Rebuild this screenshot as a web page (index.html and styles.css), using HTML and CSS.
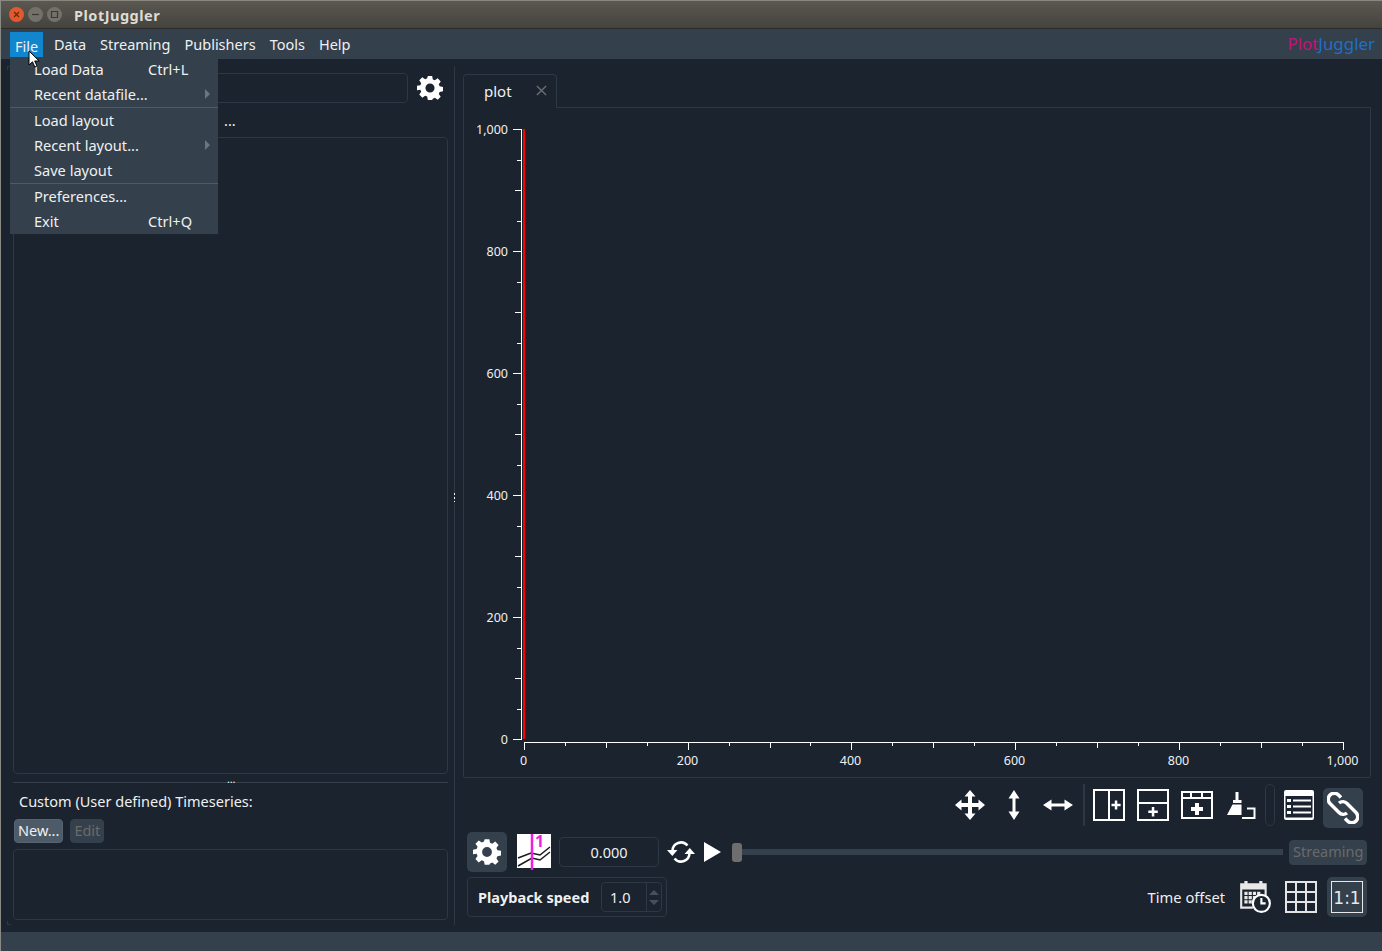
FILE: index.html
```html
<!DOCTYPE html>
<html lang="en">
<head>
  <meta charset="UTF-8" />
  <title>PlotJuggler</title>
  <link rel="stylesheet" href="styles.css">
</head>
<body>
  <div class="window">
    <div class="titlebar">
      <div class="win-buttons">
        <span class="win-btn close"><svg viewBox="0 0 15 15"><path d="M5 5l5 5M10 5l-5 5"/></svg></span>
        <span class="win-btn"><svg viewBox="0 0 15 15"><path d="M4 7.500h7"/></svg></span>
        <span class="win-btn"><svg viewBox="0 0 15 15"><path d="M4.500 4.500h6v6h-6z"/></svg></span>
      </div>
      <span class="win-title">PlotJuggler</span>
    </div>

    <div class="menubar">
      <span class="menu-item active">File</span>
      <span class="menu-item">Data</span>
      <span class="menu-item">Streaming</span>
      <span class="menu-item">Publishers</span>
      <span class="menu-item">Tools</span>
      <span class="menu-item">Help</span>
      <span class="logo"><span class="logo-plot">Plot</span><span class="logo-juggler">Juggler</span></span>
    </div>

    <div class="main">
      <div class="left-panel">
        <div class="filter-row">
          <div class="filter-box"></div>
          <svg class="gear" viewBox="0 0 24 24"><use href="#gear-icon"/></svg>
        </div>
        <div class="columns-row"><span>...</span></div>
        <div class="list-box top-list"></div>
        <div class="h-splitter"><span class="grip">...</span></div>
        <div class="custom-label">Custom (User defined) Timeseries:</div>
        <div class="custom-buttons">
          <button class="btn">New...</button>
          <button class="btn disabled">Edit</button>
        </div>
        <div class="list-box bottom-list"></div>
      </div>

      <div class="v-splitter"><span class="v-grip"></span></div>

      <div class="right-panel">
        <div class="tabs">
          <div class="tab">
            <span>plot</span>
            <svg class="tab-close" viewBox="0 0 12 12"><path d="M1 1L11 11M11 1L1 11"/></svg>
          </div>
        </div>
        <div class="plot-frame">
          <svg class="plot" id="plot" width="906" height="669" viewBox="464 108 906 669"></svg>
        </div>

        <div class="toolbar">
          <svg class="tool first" viewBox="0 0 32 32"><path class="solid" d="M16 1l5.500 6.500H18V14h6.500v-3.500L31 16l-6.500 5.500V18H18v6.500h3.500L16 31l-5.500-6.500H14V18H7.500v3.500L1 16l6.500-5.500V14H14V7.500h-3.500z"/></svg>
          <svg class="tool" viewBox="0 0 32 32"><path class="solid" d="M16 1l5.500 8.500h-4V22.500h4L16 31l-5.500-8.500h4V9.500h-4z"/></svg>
          <svg class="tool" viewBox="0 0 32 32"><path class="solid" d="M1 16l8.500-5.500v4H22.500v-4L31 16l-8.500 5.500v-4H9.500v4z"/></svg>
          <span class="tool-sep"></span>
          <svg class="tool first" viewBox="0 0 32 32"><path class="line" d="M1 1h30v30H1zM16 1v30"/><path class="solid" d="M21.800 11.500h2.500v3.300h3.300v2.500h-3.300v3.300h-2.500v-3.300h-3.300v-2.500h3.300z"/></svg>
          <svg class="tool" viewBox="0 0 32 32"><path class="line" d="M1 1h30v30H1zM1 14h30"/><path class="solid" d="M14.800 18h2.500v3.500h3.500V24h-3.500v3.500h-2.500V24h-3.500v-2.500h3.500z"/></svg>
          <svg class="tool" viewBox="0 0 32 32"><path class="line" d="M1 3h30v26H1zM1 9h30M10 3v6M21 3v6"/><path class="solid" d="M14 14h4v4h4v4h-4v4h-4v-4h-4v-4h4z"/></svg>
          <svg class="tool" viewBox="0 0 32 32"><path class="solid" d="M10.500 3h3v8h3v3H8v-3h2.500zM7.500 15.500H16.500V26H2z"/><path class="line" d="M22 19.500h7.500V29H17"/></svg>
          <span class="tool-pill"></span>
          <svg class="tool first" viewBox="0 0 32 32"><path class="solid" fill-rule="evenodd" d="M3 1h26a2 2 0 0 1 2 2v26a2 2 0 0 1-2 2H3a2 2 0 0 1-2-2V3a2 2 0 0 1 2-2zM2.500 7v21.500h27V7zM4 10h4v3H4zM10 10.500h18v2H10zM4 16h4v3H4zM10 16.500h18v2H10zM4 22h4v3H4zM10 22.500h18v2H10z"/></svg>
          <span class="tool-active link-btn">
            <svg class="tool link" viewBox="0 0 32 32">
              <path class="line chain" d="M14 5.500l-2.500-2.500a6 6 0 0 0-8.500 8.500l9 9a6 6 0 0 0 8 .5"/>
              <path class="line chain" d="M18 26.500l2.500 2.500a6 6 0 0 0 8.500-8.500l-9-9a6 6 0 0 0-8-.5"/>
            </svg>
          </span>
        </div>

        <div class="playback-row">
          <span class="icon-btn"><svg class="gear-small" viewBox="0 0 24 24"><use href="#gear-icon"/></svg></span>
          <div class="tracker">
            <svg class="tracker-img" viewBox="0 0 34 36">
              <rect x="0" y="0" width="34" height="34" fill="#fff"/>
              <path d="M1 24l13-5 9 2 10-8M1 32l14-8 8 2 10-8" fill="none" stroke="#1a1a1a" stroke-width="1.500"/>
              <path d="M15 0v36" stroke="#f01fe0" stroke-width="2.500"/>
            </svg>
            <span class="tracker-num">1</span>
          </div>
          <div class="time-box">0.000</div>
          <svg class="loop" viewBox="0 0 28 22"><path class="line loop-arc" d="M5.500 10a8.500 8.500 0 0 1 15-5.500M22.500 12a8.500 8.500 0 0 1-15 5.500"/><path class="solid" d="M0 9h10.500l-5.200 6zM17.500 13H28l-5.200-6z"/></svg>
          <svg class="play" viewBox="0 0 17 20"><path class="solid" d="M0 0l17 10L0 20z"/></svg>
          <div class="slider"><span class="slider-handle"></span></div>
          <button class="btn disabled streaming">Streaming</button>
        </div>

        <div class="speed-row">
          <div class="speed-box">
            <span class="speed-label">Playback speed</span>
            <div class="spin">
              <span class="spin-value">1.0</span>
              <span class="spin-arrows">
                <span class="arrow-up"></span>
                <span class="arrow-down"></span>
              </span>
            </div>
          </div>
          <span class="time-offset">Time offset</span>
          <span class="icon-plain">
            <svg class="calendar" viewBox="0 0 32 32">
              <path class="cal" fill-rule="evenodd" d="M2 3h4V1h3v2h11V1h3v2h4v13h-2V9H4v16h10v2H2z"/>
              <path class="cal" d="M6 11h3v3H6zM10 11h3v3h-3zM14 11h3v3h-3zM18 11h3v3h-3zM6 15h3v3H6zM10 15h3v3h-3zM14 15h3v3h-3zM6 19h3v3H6zM10 19h3v3h-3z"/>
              <circle cx="22" cy="22" r="8" fill="#1a232e" stroke="#fff" stroke-width="2"/>
              <path d="M22 17v5h4" fill="none" stroke="#fff" stroke-width="2"/>
            </svg>
          </span>
          <svg class="tool first grid-icon" viewBox="0 0 32 32"><path class="line grey" d="M1 1h30v30H1zM11 1v30M21 1v30M1 11h30M1 21h30"/></svg>
          <span class="tool-active ratio"><span class="ratio-box">1:1</span></span>
        </div>
      </div>
    </div>

    <div class="statusbar"></div>

    <div class="dropdown">
      <div class="drop-item"><span>Load Data</span><span class="shortcut">Ctrl+L</span></div>
      <div class="drop-item"><span>Recent datafile...</span><span class="submenu"></span></div>
      <div class="drop-sep"></div>
      <div class="drop-item"><span>Load layout</span></div>
      <div class="drop-item"><span>Recent layout...</span><span class="submenu"></span></div>
      <div class="drop-item"><span>Save layout</span></div>
      <div class="drop-sep"></div>
      <div class="drop-item"><span>Preferences...</span></div>
      <div class="drop-item"><span>Exit</span><span class="shortcut">Ctrl+Q</span></div>
    </div>

    <svg class="cursor" viewBox="0 0 12 18"><path d="M1 1v14l3.500-3.200 2.300 5.200 2.200-1-2.300-5h4.500z" fill="#fff" stroke="#000" stroke-width="1"/></svg>
  </div>

  <svg width="0" height="0" class="defs">
    <defs>
      <path id="gear-icon" fill="#fff" fill-rule="evenodd" d="M10 1h4l.6 3.100 1.900.8 2.600-1.800 2.800 2.800-1.800 2.600.8 1.900 3.100.6v4l-3.100.6-.8 1.900 1.800 2.600-2.800 2.800-2.600-1.800-1.900.8L14 23h-4l-.6-3.100-1.900-.8-2.600 1.800-2.800-2.800 1.800-2.600-.8-1.900L0 14v-4l3.100-.6.800-1.900-1.800-2.600 2.800-2.800 2.600 1.800 1.900-.8zM12 7.800a4.200 4.200 0 1 0 0 8.400 4.200 4.200 0 0 0 0-8.400z"/>
    </defs>
  </svg>

  <script>
    // axes of the plot, built from the tick values
    var svg = document.getElementById("plot");
    var out = "";
    function line(x1, y1, x2, y2, cls) {
      out += '<line x1="' + x1 + '" y1="' + y1 + '" x2="' + x2 + '" y2="' + y2 + '" class="' + cls + '"/>';
    }
    function label(x, y, txt, cls) {
      out += '<text x="' + x + '" y="' + y + '" class="' + cls + '">' + txt + '</text>';
    }
    function fmt(v) {
      return v == 1000 ? "1,000" : String(v);
    }
    line(521.5, 129, 521.5, 740, "axis");
    line(524, 742.5, 1343, 742.5, "axis");
    for (var v = 0; v <= 1000; v += 50) {
      var len = v % 200 == 0 ? 8 : (v % 100 == 0 ? 6 : 4);
      var y = Math.round(739 - v * 0.61);
      var x = Math.round(524 + v * 0.8185);
      line(521 - len, y + 0.5, 521, y + 0.5, "axis");
      line(x + 0.5, 742, x + 0.5, 742 + len, "axis");
      if (v % 200 == 0) {
        label(508, y + 4.5, fmt(v), "tick-y");
        label(x - 0.5, 765, fmt(v), "tick-x");
      }
    }
    out += '<rect x="523" y="129" width="2" height="610" fill="#f00"/>';
    svg.innerHTML = out;
  </script>
</body>
</html>
```

FILE: styles.css
```css
* {
  box-sizing: border-box;
}
body {
  margin: 0;
  font-family: "Noto Sans", "Open Sans", sans-serif;
  font-size: 14.500px;
  color: #eff0f1;
  background: #1a232e;
}
.defs {
  position: absolute;
}
.window {
  position: relative;
  width: 1382px;
  height: 951px;
  display: flex;
  flex-direction: column;
  overflow: hidden;
  border-left: 1px solid #8a8a84;
}
.titlebar {
  height: 29px;
  flex: none;
  display: flex;
  align-items: center;
  background: linear-gradient(#5a5851, #45433d);
  border-top: 1px solid #8a877f;
  border-bottom: 1px solid #2c2b27;
}
.win-buttons {
  display: flex;
  gap: 4px;
  margin-left: 8px;
}
.win-btn {
  width: 15px;
  height: 15px;
  border-radius: 50%;
  background: #72716a;
}
.win-btn svg {
  display: block;
  fill: none;
  stroke: #3a3934;
  stroke-width: 1.200;
}
.win-btn.close {
  background: #e25a2c;
}
.win-btn.close svg {
  stroke: #6b2410;
}
.win-title {
  margin-left: 12px;
  padding-top: 1px;
  font-weight: bold;
  font-size: 14.500px;
  letter-spacing: 0.5px;
  color: #dfdbd2;
}
.menubar {
  height: 30px;
  flex: none;
  display: flex;
  align-items: center;
  padding-left: 9px;
  background: #34404c;
}
.menu-item {
  padding: 0 7px;
  height: 25px;
  line-height: 25px;
  color: #eff0f1;
  font-size: 14.500px;
}
.menu-item.active {
  width: 33px;
  background: #1285cf;
  padding: 0 5px;
  line-height: 28px;
  margin-right: 4px;
}
.logo {
  margin-left: auto;
  margin-right: 7px;
  margin-bottom: 2px;
  font-size: 16.900px;
}
.logo-plot {
  color: #c2127f;
}
.logo-juggler {
  color: #1d6fcb;
}
.main {
  flex: 1;
  display: flex;
  min-height: 0;
  padding: 7px 0 7px 6px;
}
.left-panel {
  position: relative;
  width: 447px;
  flex: none;
  display: flex;
  flex-direction: column;
  padding: 7px 0 5px 6px;
}
.left-panel::before,
.left-panel::after {
  content: "";
  position: absolute;
  left: 0;
  width: 3px;
  height: 3px;
  border-left: 1px solid #2c3843;
}
.left-panel::before {
  top: 0;
  border-top: 1px solid #2c3843;
}
.left-panel::after {
  bottom: 0;
  border-bottom: 1px solid #2c3843;
}
.filter-row {
  height: 30px;
  flex: none;
  display: flex;
  align-items: center;
}
.filter-box {
  width: 395px;
  height: 30px;
  border: 1px solid #2c3843;
  border-radius: 4px;
}
.gear {
  width: 26px;
  height: 26px;
  margin-left: 9px;
}
.columns-row {
  height: 34px;
  flex: none;
  padding: 7px 0 0 211px;
  color: #eff0f1;
}
.list-box {
  border: 1px solid #2c3843;
  border-radius: 4px;
  width: 435px;
}
.top-list {
  flex: 1;
}
.h-splitter {
  height: 18px;
  width: 435px;
  flex: none;
  position: relative;
}
.h-splitter::before {
  content: "";
  display: block;
  margin-top: 8px;
  border-top: 1px solid #34404c;
}
.grip {
  position: absolute;
  left: 214px;
  top: -1px;
  font-size: 11px;
  line-height: 11px;
  letter-spacing: -0.2px;
}
.custom-label {
  height: 20px;
  flex: none;
  padding-left: 6px;
  line-height: 18px;
}
.custom-buttons {
  display: flex;
  gap: 7px;
  margin: 7px 0 6px 1px;
  flex: none;
}
.btn {
  font: inherit;
  color: #eff0f1;
  background: #4d5a67;
  border: 1px solid #566370;
  border-radius: 4px;
  height: 24px;
  padding: 0 3px 2px;
  line-height: 20px;
}
.btn.disabled {
  color: #6a6a6a;
  background: #34404c;
  border-color: #34404c;
}
.bottom-list {
  height: 71px;
  flex: none;
}
.v-splitter {
  width: 9px;
  flex: none;
  position: relative;
}
.v-splitter::before {
  content: "";
  position: absolute;
  left: 0;
  top: 0;
  bottom: 0;
  border-left: 1px solid #2c3843;
}
.v-grip {
  position: absolute;
  left: 0;
  top: 427px;
  width: 1px;
  height: 9px;
  background: repeating-linear-gradient(#eff0f1 0 2px, transparent 2px 4px);
}
.right-panel {
  flex: 1;
  display: flex;
  flex-direction: column;
  min-width: 0;
  padding-top: 8px;
}
.tabs {
  height: 33px;
  flex: none;
  display: flex;
}
.tab {
  position: relative;
  z-index: 1;
  width: 94px;
  height: 34px;
  display: flex;
  align-items: center;
  justify-content: space-between;
  padding: 0 9px 2px 20px;
  font-size: 15px;
  background: #1a232e;
  border: 1px solid #2c3843;
  border-bottom: 0;
  border-radius: 4px 4px 0 0;
}
.tab-close {
  width: 11px;
  height: 11px;
  fill: none;
  stroke: #6b6f72;
  stroke-width: 1.500;
}
.plot-frame {
  width: 908px;
  height: 671px;
  flex: none;
  border: 1px solid #2c3843;
  border-radius: 0 0 2px 2px;
}
.plot {
  display: block;
}
.axis {
  stroke: #fff;
  stroke-width: 1;
}
.tick-y,
.tick-x {
  fill: #eff0f1;
  font-size: 12.500px;
}
.tick-y {
  text-anchor: end;
}
.tick-x {
  text-anchor: middle;
}
.toolbar {
  height: 44px;
  flex: none;
  margin-top: 5px;
  padding-right: 19px;
  display: flex;
  align-items: center;
  justify-content: flex-end;
}
.tool {
  width: 32px;
  height: 32px;
  margin-left: 12px;
  flex: none;
}
.tool.first {
  margin-left: 8px;
}
.solid {
  fill: #fff;
}
.line {
  fill: none;
  stroke: #fff;
  stroke-width: 2;
}
.line.grey {
  stroke: #e4e4e4;
}
.line.chain {
  stroke-width: 3.500;
}
.line.loop-arc {
  stroke-width: 2.500;
}
.tool-sep {
  width: 2px;
  height: 42px;
  margin-left: 9px;
  background: #2c3843;
}
.tool-pill {
  width: 10px;
  height: 42px;
  margin-left: 8px;
  border: 1px solid #2c3843;
  border-radius: 5px;
}
.tool-active {
  width: 40px;
  height: 40px;
  margin-left: 8px;
  border-radius: 5px;
  background: #34404c;
  display: flex;
  align-items: center;
  justify-content: center;
  flex: none;
}
.link-btn {
  margin-top: 6px;
}
.tool-active .tool {
  margin: 0;
}
.playback-row {
  height: 44px;
  flex: none;
  margin-top: 3px;
  padding: 0 15px 0 4px;
  display: flex;
  align-items: center;
}
.icon-btn {
  width: 40px;
  height: 40px;
  border-radius: 5px;
  background: #34404c;
  display: flex;
  align-items: center;
  justify-content: center;
  flex: none;
}
.gear-small {
  width: 28px;
  height: 28px;
}
.tracker {
  position: relative;
  width: 34px;
  height: 36px;
  margin-left: 10px;
  flex: none;
}
.tracker-img {
  display: block;
  width: 34px;
  height: 36px;
}
.tracker-num {
  position: absolute;
  left: 18px;
  top: -2px;
  color: #f01fe0;
  font-size: 16px;
  line-height: 18px;
  font-weight: bold;
}
.time-box {
  width: 100px;
  height: 30px;
  margin-left: 8px;
  border: 1px solid #2c3843;
  border-radius: 4px;
  text-align: center;
  line-height: 28px;
  flex: none;
}
.loop {
  width: 28px;
  height: 22px;
  margin-left: 8px;
  flex: none;
}
.play {
  width: 17px;
  height: 20px;
  margin-left: 9px;
  flex: none;
}
.slider {
  flex: 1;
  height: 6px;
  margin-left: 11px;
  background: #34404c;
  position: relative;
}
.slider-handle {
  position: absolute;
  left: 0;
  top: -6px;
  width: 10px;
  height: 19px;
  border-radius: 3px;
  background: #6e6e6e;
}
.btn.streaming {
  height: 25px;
  margin-left: 6px;
  width: 78px;
  flex: none;
}
.speed-row {
  height: 40px;
  flex: none;
  margin-top: 3px;
  padding: 0 15px 0 4px;
  display: flex;
  align-items: center;
}
.speed-box {
  width: 200px;
  height: 40px;
  border: 1px solid #2c3843;
  border-radius: 4px;
  display: flex;
  align-items: center;
  padding-left: 10px;
}
.speed-label {
  font-weight: bold;
}
.spin {
  width: 61px;
  height: 30px;
  margin-left: auto;
  margin-right: 4px;
  border: 1px solid #2c3843;
  border-radius: 4px;
  display: flex;
  align-items: center;
  padding-left: 8px;
}
.spin-value {
  flex: 1;
}
.spin-arrows {
  width: 15px;
  height: 100%;
  border-left: 1px solid #2c3843;
  display: flex;
  flex-direction: column;
  align-items: center;
  justify-content: space-around;
  padding: 4px 0;
}
.arrow-up {
  border: 5px solid transparent;
  border-top: 0;
  border-bottom: 5px solid #46505a;
}
.arrow-down {
  border: 5px solid transparent;
  border-bottom: 0;
  border-top: 5px solid #46505a;
}
.time-offset {
  margin-left: auto;
  font-size: 14.700px;
  color: #eff0f1;
}
.icon-plain {
  width: 36px;
  height: 36px;
  margin-left: 12px;
  display: flex;
  align-items: center;
  justify-content: center;
  flex: none;
}
.calendar {
  width: 34px;
  height: 34px;
}
.cal {
  fill: #e8e8e8;
}
.tool.grid-icon {
  margin-left: 12px;
}
.ratio {
  margin-left: 10px;
}
.ratio-box {
  width: 32px;
  height: 32px;
  border: 1px solid #e8e8e8;
  color: #e8e8e8;
  font-family: "DejaVu Sans", sans-serif;
  font-size: 17px;
  line-height: 32px;
  text-align: center;
}
.statusbar {
  height: 19px;
  flex: none;
  background: #34404c;
}
.dropdown {
  position: absolute;
  left: 9px;
  top: 57px;
  width: 208px;
  background: #34404c;
  font-size: 14.600px;
}
.drop-item {
  height: 25px;
  display: flex;
  align-items: center;
  padding: 0 0 2px 24px;
  position: relative;
  color: #eff0f1;
}
.shortcut {
  position: absolute;
  left: 138px;
}
.submenu {
  position: absolute;
  right: 8px;
  top: 7px;
  border-left: 5px solid #6e757c;
  border-top: 5px solid transparent;
  border-bottom: 5px solid transparent;
}
.drop-sep {
  height: 1px;
  background: #4d5a67;
}
.cursor {
  position: absolute;
  left: 27px;
  top: 50px;
  width: 12px;
  height: 18px;
}
```
